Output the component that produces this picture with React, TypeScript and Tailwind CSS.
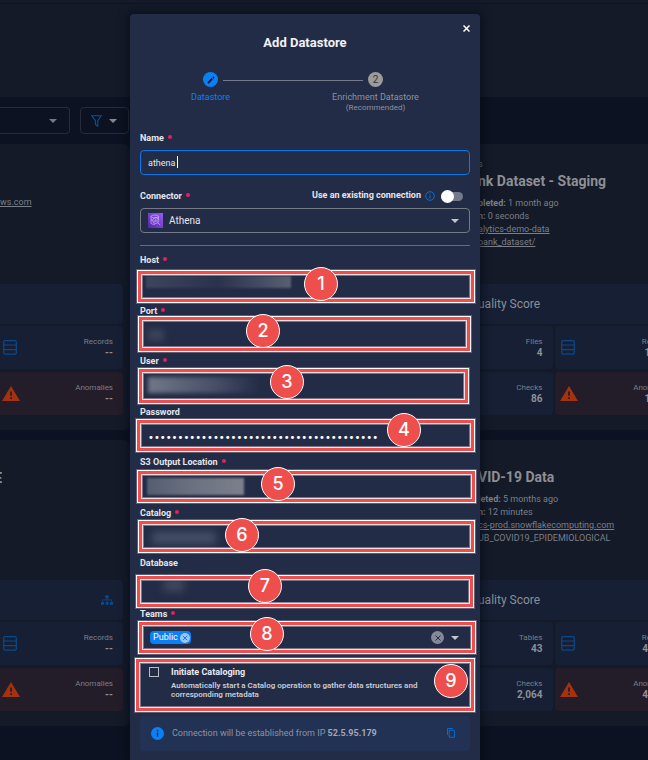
import React from "react";
import { FaSitemap } from "react-icons/fa";

const ANNOTATIONS = [
  { n: 1, box: "left-[7px] top-[256px] w-[338px] h-[33px]", badge: "left-[174px] top-[253px]" },
  { n: 2, box: "left-[8px] top-[302px] w-[333px] h-[36px]", badge: "left-[116px] top-[300px]" },
  { n: 3, box: "left-[8px] top-[354px] w-[331px] h-[36px]", badge: "left-[140px] top-[351px]" },
  { n: 4, box: "left-[6px] top-[405px] w-[339px] h-[33px]", badge: "left-[257px] top-[399px]" },
  { n: 5, box: "left-[7px] top-[456px] w-[339px] h-[33px]", badge: "left-[131px] top-[453px]" },
  { n: 6, box: "left-[8px] top-[506px] w-[337px] h-[33px]", badge: "left-[95px] top-[504px]" },
  { n: 7, box: "left-[6px] top-[561px] w-[338px] h-[33px]", badge: "left-[118px] top-[555px]" },
  { n: 8, box: "left-[8px] top-[607px] w-[338px] h-[33px]", badge: "left-[120px] top-[603px]" },
  { n: 9, box: "left-[5px] top-[644px] w-[340px] h-[54px]", badge: "left-[304px] top-[650px]" },
];

function Annotations() {
  return (
    <div className="pointer-events-none absolute inset-0">
      {ANNOTATIONS.map((a) => (
        <React.Fragment key={a.n}>
          <div className={`absolute border border-white outline outline-1 outline-[#7d8395]/60 ${a.box}`}>
            <div className="h-full border-[3px] border-[#ee4f4d]">
              <div className="h-full border border-[#f3dfe2] outline outline-1 -outline-offset-2 outline-[#9499a8]/70" />
            </div>
          </div>
          <div
            className={`absolute flex size-[34px] items-center justify-center rounded-full border border-white bg-[#ee4f4d] font-[Inter,sans-serif] text-lg font-medium leading-5 text-white ${a.badge}`}
          >
            {a.n}
          </div>
        </React.Fragment>
      ))}
    </div>
  );
}

function Label({ id, text, required }: { id: string; text: string; required?: boolean }) {
  return (
    <label htmlFor={id} className="flex h-4 items-center gap-1 text-[9px] font-bold leading-4 text-[#e4e6ec]">
      {text}
      {required && <span className="mb-0.5 size-1 rounded-full bg-[#e91e63]" />}
    </label>
  );
}

function Caret({ className = "" }: { className?: string }) {
  return (
    <svg viewBox="0 0 8 4" className={`h-1 w-2 ${className}`} fill="currentColor">
      <path d="M0 0h8L4 4z" />
    </svg>
  );
}

type FieldProps = {
  id: string;
  label: string;
  required?: boolean;
  redaction?: string;
  underline?: boolean;
};

function Field({ id, label, required, redaction, underline }: FieldProps) {
  return (
    <div>
      <Label id={id} text={label} required={required} />
      <div className={`relative mt-1 h-[28px] ${underline ? "border-b border-[#747a8c]" : ""}`}>
        <input id={id} type="text" className="h-full w-full bg-transparent px-2 text-[9px] text-white outline-none" />
        {redaction && <span className={`absolute ${redaction}`} />}
      </div>
    </div>
  );
}

function TableIcon() {
  return (
    <svg viewBox="0 0 14 15" className="h-[15px] w-[14px] text-[#0a4a8c]" fill="none" stroke="currentColor" strokeWidth="1.2">
      <rect x="0.7" y="0.7" width="12.6" height="13.4" rx="1.2" />
      <path d="M.7 5h12.6M.7 9.6h12.6" />
    </svg>
  );
}

function WarningIcon() {
  return (
    <svg viewBox="0 0 18 15" className="-ml-px h-[15px] w-[18px]">
      <path d="M9 0l9 15H0z" fill="#a5320f" />
      <path d="M8.2 5.4h1.7v4.4H8.2zM8.2 11.2h1.7v1.7H8.2z" fill="#241c28" />
    </svg>
  );
}

function Tile({ label, value, icon, alert }: { label: string; value: string; icon?: React.ReactNode; alert?: boolean }) {
  return (
    <div className={`flex h-[43px] items-center justify-between rounded pl-1.5 pr-2.5 ${alert ? "bg-[#231c29]" : "bg-[#161f34]"}`}>
      <span>{icon}</span>
      <span className="flex flex-col items-end text-[#7b7f87]">
        <span className="text-[8px] leading-[10px]">{label}</span>
        <span className="text-[10px] font-bold leading-[11px] text-[#8d9097]">{value}</span>
      </span>
    </div>
  );
}

type CardProps = {
  children?: React.ReactNode;
  score?: React.ReactNode;
  first: [string, string];
  checks: string;
  records: string;
};

function Card({ children, score, first, checks, records }: CardProps) {
  return (
    <article className="flex h-[286px] flex-col rounded-md bg-[#141a28] px-[7px] pb-[15px]">
      <div className="flex-1 overflow-hidden">{children}</div>
      <div className="mb-0.5 flex h-10 items-center rounded bg-[#161f34] text-[#8b8e95]">{score}</div>
      <div className="grid grid-cols-2 gap-x-0.5 gap-y-[3px]">
        <Tile label={first[0]} value={first[1]} />
        <Tile label="Records" value={records} icon={<TableIcon />} />
        <Tile label="Checks" value={checks} />
        <Tile label="Anomalies" value={records} icon={<WarningIcon />} alert />
      </div>
    </article>
  );
}

type DetailProps = { tag: string; title: string; completed: string; age: string; lead: string; time: string; children: React.ReactNode };

function Details({ tag, title, completed, age, lead, time, children }: DetailProps) {
  return (
    <div className="flex flex-col items-start whitespace-nowrap pl-[52px] pt-[14px] text-[9px] leading-[13px] text-[#7b7f87]">
      <span>{tag}</span>
      <h2 className="mb-1.5 mt-px text-[14px] font-bold leading-[19px] text-[#8d8f94]">{title}</h2>
      <span>
        <b>{completed}</b> {age}
      </span>
      <span>
        <b>{lead}</b> {time}
      </span>
      {children}
    </div>
  );
}

function Background() {
  const score = <span className="pl-[52px] text-[12px]">uality Score</span>;
  return (
    <main className="min-h-screen overflow-hidden bg-[#0c1221]">
      <header className="h-[97px] bg-[#141a28]">
        <div className="h-1 border-b border-[#0f1521]" />
      </header>
      <div className="flex h-[47px] items-center gap-2.5">
        <button aria-label="Sort" className="flex h-[27px] w-[70px] items-center justify-end rounded-r-sm border border-l-0 border-[#262c3a] pr-3 text-[#75787f]">
          <Caret />
        </button>
        <button aria-label="Filter" className="flex h-[27px] w-[49px] items-center gap-[7px] rounded-sm border border-[#262c3a] pl-2.5 text-[#85888e]">
          <svg viewBox="0 0 11 12" className="h-3 w-[11px]" fill="none" stroke="#0a5297" strokeWidth="1.1">
            <path d="M.8.8h9.4L6.8 5.6v5.6L4.4 9.4V5.6z" />
          </svg>
          <Caret />
        </button>
      </div>
      <div className="-ml-[139px] grid w-[827px] grid-cols-3 gap-2.5">
        <Card first={["Tables", "--"]} checks="--" records="--">
          <div className="pl-[132px] pt-[52px] text-[9px] leading-[13px] text-[#7b7f87]">
            <a href="#" className="underline">ws.com</a>
          </div>
        </Card>
        <Card first={["Tables", "--"]} checks="--" records="--" />
        <Card score={score} first={["Files", "4"]} checks="86" records="12.5K">
          <Details tag="s" title="nk Dataset - Staging" completed="pleted:" age="1 month ago" lead="n:" time="0 seconds">
            <a href="#" className="underline">alytics-demo-data</a>
            <a href="#" className="underline">bank_dataset/</a>
          </Details>
        </Card>
        <Card
          score={<FaSitemap className="ml-auto mr-2.5 size-3 text-[#0a4a8c]" />}
          first={["Tables", "--"]}
          checks="--"
          records="--"
        >
          <div className="ml-[132px] mt-[29px] flex w-0.5 justify-end overflow-hidden text-[14px] font-bold leading-[19px] text-[#8d8f94]">E</div>
        </Card>
        <Card first={["Tables", "--"]} checks="--" records="--" />
        <Card score={score} first={["Tables", "43"]} checks="2,064" records="43.8M">
          <Details tag="," title="VID-19 Data" completed="leted:" age="5 months ago" lead="n:" time="12 minutes">
            <a href="#" className="underline">cs-prod.snowflakecomputing.com</a>
            <span>UB_COVID19_EPIDEMIOLOGICAL</span>
          </Details>
        </Card>
      </div>
    </main>
  );
}

function Stepper() {
  return (
    <ol className="relative -ml-3 mr-3 grid grid-cols-2 text-center text-[9px] leading-3">
      <li className="flex flex-col items-center text-[#0a80f5]">
        <span className="mb-1 flex size-[15px] items-center justify-center rounded-full bg-[#0a80f5]">
          <svg viewBox="0 0 8 8" className="size-2" stroke="#0b1020" strokeWidth="1.8">
            <path d="M1 7l4.3-4.3M6 2l1-1" />
          </svg>
        </span>
        Datastore
      </li>
      <li className="flex flex-col items-center text-[#8d92a0]">
        <span className="mb-1 flex size-[15px] items-center justify-center rounded-full bg-[#9b9b9b] text-[10px] text-[#30343f]">2</span>
        Enrichment Datastore
        <span className="text-[8px] leading-[10px]">(Recommended)</span>
      </li>
      <li aria-hidden="true" className="absolute left-1/2 top-2 h-px w-[140px] -translate-x-1/2 bg-[#757b8d]" />
    </ol>
  );
}

function AthenaIcon() {
  return (
    <svg viewBox="0 0 15 15" className="pointer-events-none absolute left-2 top-[5px] size-[15px]" fill="none" stroke="#cdb6f7" strokeWidth="0.7">
      <defs>
        <linearGradient id="athena" x1="0" y1="1" x2="1" y2="0">
          <stop stopColor="#5226a5" />
          <stop offset="1" stopColor="#9a5cf5" />
        </linearGradient>
      </defs>
      <path d="M0 0h15v15H0z" fill="url(#athena)" stroke="none" />
      <path d="M3 3.5c0-1.8 7.4-1.8 7.4 0v3M3 3.5v6.4c0 1 2 1.5 4 1.5M3 3.5c0 1.6 7.4 1.6 7.4 0M3 6.6l1.8.8" />
      <circle cx="7.7" cy="7.6" r="2.9" />
      <path d="M9.8 9.8l2.4 2.3M6.4 8.8V7.5M7.7 8.9V6.1M9 8.8V7.1" />
    </svg>
  );
}

function DatastoreDialog() {
  return (
    <section role="dialog" aria-labelledby="dialog-title" className="relative min-h-[746px] w-[350px] rounded-t bg-[#232c46] px-2.5 pb-[9px] shadow-[0_0_10px_2px_rgba(4,8,18,0.6)]">
      <div className="flex h-5 items-end justify-end">
        <button aria-label="Close" className="flex size-2 items-center justify-center pb-1 text-white">
          <svg viewBox="0 0 7 7" className="size-[7px] shrink-0" stroke="currentColor" strokeWidth="1.5">
            <path d="M.5.5l6 6M6.5.5l-6 6" />
          </svg>
        </button>
      </div>
      <h1 id="dialog-title" className="mb-5 text-center text-[13px] font-bold leading-[18px] text-[#f1f2f5]">
        Add Datastore
      </h1>
      <Stepper />

      <div className="mt-[17px]">
        <Label id="name" text="Name" required />
        <div className="relative mt-1">
          <input
            id="name"
            defaultValue="athena"
            className="block h-[25px] w-full rounded-sm border border-[#0a78e6] bg-transparent px-[7px] text-[9px] text-[#e4e6ec] outline-none"
          />
          <span className="absolute left-[37px] top-1.5 h-3 w-px bg-white" />
        </div>
      </div>

      <div className="mt-[13px] flex h-4 items-center justify-between">
        <Label id="connector" text="Connector" required />
        <label className="flex items-center text-[9px] font-bold text-[#e4e6ec]">
          Use an existing connection
          <svg viewBox="0 0 10 10" className="ml-1 mr-1.5 size-[10px]" fill="none" stroke="#0a70d8">
            <circle cx="5" cy="5" r="4.3" />
            <path d="M5 4.5v3M5 2.5v1" />
          </svg>
          <input type="checkbox" role="switch" className="peer sr-only" />
          <span className="mr-[7px] flex h-[9px] w-[22px] items-center rounded-full bg-[#747a8a]">
            <span className="size-[13px] shrink-0 rounded-full bg-white" />
          </span>
        </label>
      </div>
      <div className="relative mt-1 text-[#e4e6ec]">
        <AthenaIcon />
        <select id="connector" className="block h-[25px] w-full appearance-none rounded-sm border border-[#747a83] bg-transparent pl-7 text-[10px] outline-none">
          <option>Athena</option>
        </select>
        <Caret className="pointer-events-none absolute right-[11px] top-[11px] text-[#c3c6ce]" />
      </div>
      <hr className="mb-1.5 mt-3 border-[#646b7d]" />

      <div className="grid h-[404px] grid-rows-8">
        <Field id="host" label="Host" required redaction="left-1.5 top-1 h-3 w-[145px] bg-linear-to-r from-[#3d455c] via-[#2a334c] to-[#596072] blur-[1px]" />
        <Field id="port" label="Port" required redaction="left-2 top-1.5 h-3 w-4 bg-[#3b435b] blur-[3px]" />
        <Field id="user" label="User" required redaction="left-2 top-1 h-4 w-[112px] bg-linear-to-r from-[#727888] via-[#475067] via-60% to-[#232c46] blur-[2px]" />
        <div>
          <Label id="password" text="Password" />
          <input
            id="password"
            type="password"
            defaultValue={"x".repeat(39)}
            className="mt-1 block h-[28px] w-full bg-transparent px-2 font-['DejaVu_Sans',sans-serif] text-[10px] text-white outline-none"
          />
        </div>
        <Field id="s3" label="S3 Output Location" required redaction="left-[7px] top-1 h-[17px] w-[97px] bg-linear-to-r from-[#555d70] via-[#6d7281] to-[#7c808c] blur-[1px]" />
        <Field id="catalog" label="Catalog" required redaction="left-3 top-[7px] h-3 w-[64px] bg-[#465067] blur-xs" />
        <Field id="database" label="Database" underline redaction="left-6 top-1 h-3 w-5 bg-[#414a61] blur-xs" />
        <div>
          <Label id="teams" text="Teams" required />
          <div className="mt-0.5 flex h-[28px] items-center pl-2.5 pr-[11px]">
            <span className="flex h-[13px] items-center gap-0.5 rounded-sm bg-[#0a80f5] pl-[3px] pr-px text-[9px] text-white">
              Public
              <button aria-label="Remove Public" className="flex size-[10px] items-center justify-center rounded-full bg-[#9cc5f2]">
                <svg viewBox="0 0 6 6" className="size-1.5" stroke="#0a80f5">
                  <path d="M.8.8l4.4 4.4M5.2.8L.8 5.2" />
                </svg>
              </button>
            </span>
            <input id="teams" className="min-w-0 flex-1 bg-transparent outline-none" />
            <button aria-label="Clear teams" className="mr-[7px] flex size-[13px] items-center justify-center rounded-full bg-[#84899a]">
              <svg viewBox="0 0 6 6" className="size-1.5" stroke="#232c46">
                <path d="M.5.5l5 5M5.5.5l-5 5" />
              </svg>
            </button>
            <Caret className="text-[#c3c6ce]" />
          </div>
        </div>
      </div>

      <div className="mb-[7px] flex h-[53px] items-start gap-3 pl-[9px] pt-[11px]">
        <input id="catalog-run" type="checkbox" className="size-[10px] appearance-none border border-[#b9bdc7]" />
        <label htmlFor="catalog-run" className="text-[8px] leading-[9px] text-[#c8ccd5]">
          <span className="mb-[3px] block text-[9px] font-bold leading-[11px] text-[#e8eaf0]">Initiate Cataloging</span>
          <span className="block w-[270px] font-semibold">
            Automatically start a Catalog operation to gather data structures and corresponding metadata
          </span>
        </label>
      </div>

      <div className="flex h-[35px] items-center rounded-sm bg-[#223254] pl-[11px] pr-[15px] text-[9px] text-[#8d93a2]">
        <svg viewBox="0 0 13 13" className="mr-2 size-[13px]">
          <circle cx="6.5" cy="6.5" r="6.5" fill="#0a80f5" />
          <path d="M5.8 5.6h1.5v4.2H5.8zM5.8 3.1h1.5v1.5H5.8z" fill="#223254" />
        </svg>
        <p>
          Connection will be established from IP <b className="text-[#a3a8b4]">52.5.95.179</b>
        </p>
        <button aria-label="Copy IP address" className="ml-auto">
          <svg viewBox="0 0 8 10" className="mb-0.5 h-[10px] w-2" fill="none" stroke="#0a6ed6" strokeWidth="0.9">
            <path d="M.5 7V.5h5.2M2.2 2.3h5.3v7H2.2z" />
          </svg>
        </button>
      </div>

      <Annotations />
    </section>
  );
}

export default function App() {
  return (
    <div className="relative min-h-screen overflow-hidden font-[Roboto,sans-serif]">
      <Background />
      <div className="absolute inset-x-0 top-[14px] flex justify-center pr-[38px]">
        <DatastoreDialog />
      </div>
    </div>
  );
}
